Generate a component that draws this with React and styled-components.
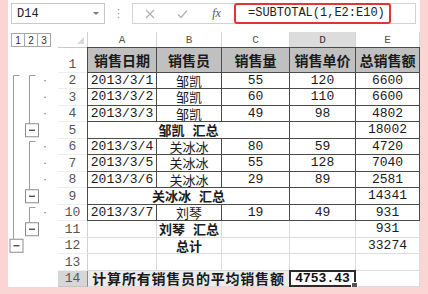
import React from 'react';
import styled, { createGlobalStyle } from 'styled-components';

const MONO = `"Liberation Mono", "Noto Sans CJK SC", monospace`;
const SANS = `"Liberation Sans", "Noto Sans CJK SC", sans-serif`;
const DARK = '#4a4a4a';
const LIGHT = '#dcdcdc';

const GlobalStyle = createGlobalStyle`
	html, body {
		margin: 0;
		padding: 0;
		background: #fbd4d4;
	}
	body {
		width: 428px;
		height: 294px;
		overflow: hidden;
	}
`;

const columns = ['A', 'B', 'C', 'D', 'E'];

// row data: [rowNo, cells], cell = { t, span, bold }
const rows = [
	{ n: 1, tone: 'head', cells: ['销售日期', '销售员', '销售量', '销售单价', '总销售额'] },
	{ n: 2, tone: 'table', cells: ['2013/3/1', '邹凯', '55', '120', '6600'] },
	{ n: 3, tone: 'table', cells: ['2013/3/2', '邹凯', '60', '110', '6600'] },
	{ n: 4, tone: 'table', cells: ['2013/3/3', '邹凯', '49', '98', '4802'] },
	{ n: 5, tone: 'table', cells: [{ t: '邹凯 汇总', span: 3, bold: true }, '', '18002'] },
	{ n: 6, tone: 'table', cells: ['2013/3/4', '关冰冰', '80', '59', '4720'] },
	{ n: 7, tone: 'table', cells: ['2013/3/5', '关冰冰', '55', '128', '7040'] },
	{ n: 8, tone: 'table', cells: ['2013/3/6', '关冰冰', '29', '89', '2581'] },
	{ n: 9, tone: 'table', cells: [{ t: '关冰冰 汇总', span: 3, bold: true }, '', '14341'] },
	{ n: 10, tone: 'table', cells: ['2013/3/7', '刘琴', '19', '49', '931'] },
	{ n: 11, tone: 'grid', cells: ['', { t: '刘琴 汇总', bold: true }, '', '', '931'] },
	{ n: 12, tone: 'grid', cells: ['', { t: '总计', bold: true }, '', '', '33274'] },
	{ n: 13, tone: 'grid', cells: ['', '', '', '', ''] },
];

const Frame = styled.div`
	margin-left: 8px;
	width: 412px;
	height: 287px;
	background: #fff;
	display: flex;
	flex-direction: column;
	overflow: hidden;
`;

const Toolbar = styled.div`
	height: 32px;
	box-sizing: border-box;
	padding: 3px 0 0 3px;
	display: flex;
	align-items: flex-start;
`;

const NameBox = styled.div`
	width: 94px;
	height: 21px;
	box-sizing: border-box;
	border: 1px solid #c9c9c9;
	display: flex;
	align-items: center;
	justify-content: space-between;
	padding: 0 5px 0 5px;
	font: 12px ${MONO};
	color: #222;
`;

const Caret = styled.span`
	width: 0;
	height: 0;
	border-left: 3px solid transparent;
	border-right: 3px solid transparent;
	border-top: 3px solid #777;
`;

const Grip = styled.div`
	width: 27px;
	height: 21px;
	display: flex;
	align-items: center;
	justify-content: center;
`;

const FormulaBox = styled.div`
	width: 284px;
	height: 21px;
	box-sizing: border-box;
	border: 1px solid #d2d2d2;
	display: flex;
	align-items: center;
	position: relative;
`;

const ToolIcon = styled.span`
	width: 33px;
	display: flex;
	justify-content: center;
	color: #b4b4b4;
`;

const Fx = styled.span`
	width: 35px;
	font: italic 12px "Liberation Serif", serif;
	color: #555;
	text-align: center;
`;

const FormulaInput = styled.div`
	width: 157px;
	height: 21px;
	margin-top: -1px;
	box-sizing: border-box;
	border: 2px solid #e23434;
	border-radius: 3px;
	display: flex;
	align-items: center;
	padding-left: 12px;
	font: 12px ${MONO};
	color: #222;
	background: #fff;
`;

const Sheet = styled.div`
	display: grid;
	grid-template-columns: 50px 30px 69px 65px 68px 66px 64px;
	grid-template-rows: 16px 24.5px repeat(13, 16.5px);
`;

const Levels = styled.div`
	display: flex;
	padding: 1px 0 0 3px;
	align-items: flex-start;
`;

const LevelButton = styled.span`
	width: 14px;
	height: 14px;
	box-sizing: border-box;
	border: 1px solid #a8a8a8;
	margin-left: -1px;
	display: flex;
	align-items: center;
	justify-content: center;
	font: 10px ${SANS};
	color: #333;
	&:first-child {
		margin-left: 0;
	}
`;

const Corner = styled.div`
	border-right: 1px solid #d0d0d0;
	border-bottom: 1px solid #c8c8c8;
	display: flex;
	align-items: flex-end;
	justify-content: flex-end;
	padding: 0 3px 3px 0;
`;

const Triangle = styled.span`
	width: 0;
	height: 0;
	border-left: 7px solid transparent;
	border-bottom: 7px solid #d8d8d8;
`;

const ColHead = styled.div`
	box-sizing: border-box;
	border-right: 1px solid #d4d4d4;
	border-bottom: 1px solid ${p => (p.$selected ? '#9a9a9a' : '#c8c8c8')};
	background: ${p => (p.$selected ? '#dcdcdc' : '#fff')};
	display: flex;
	align-items: center;
	justify-content: center;
	font: 11px ${MONO};
	color: ${p => (p.$selected ? '#333' : '#555')};
`;

const Outline = styled.svg`
	grid-column: 1;
	grid-row: 2 / span 14;
	display: block;
`;

const RowHead = styled.div`
	box-sizing: border-box;
	border-right: 1px solid ${p => (p.$selected ? '#8a8a8a' : '#d0d0d0')};
	border-bottom: 1px solid ${p => (p.$selected ? '#c4c4c4' : '#eeeeee')};
	background: ${p => (p.$selected ? '#d6d6d6' : '#fff')};
	display: flex;
	align-items: flex-end;
	justify-content: center;
	font: 13px ${MONO};
	line-height: 15px;
	color: #555;
`;

const Cell = styled.div`
	grid-column: span ${p => p.$span || 1};
	box-sizing: border-box;
	border-right: 1px solid ${p => (p.$tone === 'grid' ? LIGHT : DARK)};
	border-bottom: 1px solid ${p => (p.$tone === 'grid' ? LIGHT : DARK)};
	${p => p.$lead && p.$tone !== 'grid' && `margin-left: -1px; border-left: 1px solid ${DARK};`}
	${p => p.$tone === 'head' && `margin-top: -1px; border-top: 1px solid ${DARK};`}
	background: ${p => (p.$tone === 'head' ? '#c0c0c0' : '#fff')};
	display: flex;
	align-items: center;
	justify-content: center;
	white-space: nowrap;
	overflow: visible;
	font-family: ${MONO};
	font-size: ${p => (p.$tone === 'head' ? '14px' : '13px')};
	font-weight: ${p => (p.$bold || p.$tone === 'head' ? 700 : 400)};
	color: #1a1a1a;
	position: relative;
	z-index: ${p => (p.$bold ? 1 : 0)};
`;

const NoteCell = styled(Cell)`
	font-size: 14px;
	letter-spacing: 0.8px;
	background: #ececec;
`;

const ActiveCell = styled.div`
	box-sizing: border-box;
	margin: -1px 0 0 -1px;
	border: 2px solid #2b2b2b;
	display: flex;
	align-items: center;
	justify-content: center;
	font: 700 13px ${MONO};
	color: #111;
	position: relative;
	z-index: 2;
`;

const Handle = styled.span`
	position: absolute;
	right: -4px;
	bottom: -4px;
	width: 5px;
	height: 5px;
	background: #555;
	border: 1px solid #fff;
`;

// outline geometry (local to outline column, starting at row 1 top)
const rowTop = n => (n === 1 ? 0 : 24.5 + (n - 2) * 16.5);
const rowMid = n => rowTop(n) + (n === 1 ? 12.25 : 8.25);

const MinusButton = ({ x, n }) => {
	const y = rowMid(n) - 7;
	return (
		<g>
			<rect x={x + 0.5} y={y + 0.5} width="13" height="13" fill="#fff" stroke="#8c8c8c" />
			<line x1={x + 4} y1={y + 7} x2={x + 10} y2={y + 7} stroke="#333" strokeWidth="1.2" />
		</g>
	);
};

const OutlineDrawing = () => {
	const groups = [
		{ from: 2, to: 5 },
		{ from: 6, to: 9 },
		{ from: 10, to: 11 },
	];
	const details = [2, 3, 4, 6, 7, 8, 10];
	return (
		<Outline width="50" height="239" viewBox="0 0 50 239">
			<g stroke="#9a9a9a" strokeWidth="1" fill="none">
				<polyline points={`11.5,27.5 5.5,27.5 5.5,${rowMid(12) - 7}`} />
				{groups.map(g => (
					<polyline
						key={g.from}
						points={`27.5,${rowTop(g.from) + 3} 21.5,${rowTop(g.from) + 3} 21.5,${rowMid(g.to) - 7}`}
					/>
				))}
			</g>
			{details.map(n => (
				<circle key={n} cx="37" cy={rowMid(n)} r="0.8" fill="#777" />
			))}
			{groups.map(g => (
				<MinusButton key={g.to} x={17} n={g.to} />
			))}
			<MinusButton x={1.5} n={12} />
		</Outline>
	);
};

const renderCells = row =>
	row.cells.map((c, i) => {
		const cell = typeof c === 'string' ? { t: c } : c;
		return (
			<Cell key={i} $tone={row.tone} $span={cell.span} $bold={cell.bold} $lead={i === 0}>
				{cell.t}
			</Cell>
		);
	});

export default function App() {
	return (
		<>
			<GlobalStyle />
			<Frame>
				<Toolbar>
					<NameBox>
						<span>D14</span>
						<Caret />
					</NameBox>
					<Grip>
						<svg width="3" height="11" viewBox="0 0 3 11">
							<circle cx="1.5" cy="1.5" r="0.8" fill="#a0a0a0" />
							<circle cx="1.5" cy="5.5" r="0.8" fill="#a0a0a0" />
							<circle cx="1.5" cy="9.5" r="0.8" fill="#a0a0a0" />
						</svg>
					</Grip>
					<FormulaBox>
						<ToolIcon>
							<svg width="10" height="10" viewBox="0 0 10 10">
								<path d="M1 1 L9 9 M9 1 L1 9" stroke="#b0b0b0" strokeWidth="1.2" />
							</svg>
						</ToolIcon>
						<ToolIcon>
							<svg width="11" height="10" viewBox="0 0 11 10">
								<path d="M1 5.5 L4 8.5 L10 1.5" stroke="#b0b0b0" strokeWidth="1.2" fill="none" />
							</svg>
						</ToolIcon>
						<Fx>fx</Fx>
						<FormulaInput>=SUBTOTAL(1,E2:E10)</FormulaInput>
					</FormulaBox>
				</Toolbar>
				<Sheet>
					<Levels>
						<LevelButton>1</LevelButton>
						<LevelButton>2</LevelButton>
						<LevelButton>3</LevelButton>
					</Levels>
					<Corner>
						<Triangle />
					</Corner>
					{columns.map(c => (
						<ColHead key={c} $selected={c === 'D'}>
							{c}
						</ColHead>
					))}
					<OutlineDrawing />
					{rows.map(row => (
						<React.Fragment key={row.n}>
							<RowHead>{row.n}</RowHead>
							{renderCells(row)}
						</React.Fragment>
					))}
					<RowHead $selected>14</RowHead>
					<NoteCell $tone="grid" $span={3} $bold>
						计算所有销售员的平均销售额
					</NoteCell>
					<ActiveCell>
						4753.43
						<Handle />
					</ActiveCell>
					<Cell $tone="grid" />
				</Sheet>
			</Frame>
		</>
	);
}
